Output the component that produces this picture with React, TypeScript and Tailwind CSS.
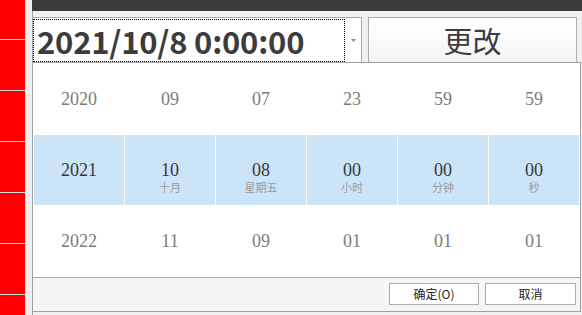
import React from "react";

const cols = [
  { prev: "2020", cur: "2021", next: "2022", sub: "" },
  { prev: "09", cur: "10", next: "11", sub: "十月" },
  { prev: "07", cur: "08", next: "09", sub: "星期五" },
  { prev: "23", cur: "00", next: "01", sub: "小时" },
  { prev: "59", cur: "00", next: "01", sub: "分钟" },
  { prev: "59", cur: "00", next: "01", sub: "秒" },
];

const serif = { fontFamily: '"Liberation Serif", serif' };
const cjk = '"Noto Sans CJK SC", sans-serif';

export default function App() {
  return (
    <div className="flex w-[582px] h-[315px] overflow-hidden bg-[#f0f0f0]">
      {/* red strip */}
      <div className="flex flex-col w-[25px] bg-[#ff0000] shrink-0">
        <div className="h-[40px] shrink-0 border-b border-[#d8d8d8]" />
        {[0, 1, 2, 3, 4, 5].map((i) => (
          <div key={i} className="h-[51px] shrink-0 border-b border-[#d8d8d8]" />
        ))}
      </div>
      <div className="w-px bg-[#e6e6e6] shrink-0" />
      <div className="w-[6px] bg-[#f0f0f0] shrink-0" />
      {/* main */}
      <div className="flex flex-col w-[550px] shrink-0">
        <div className="h-[11px] bg-[#3c3c3c] shrink-0" />
        <div className="flex flex-col flex-1 border-l border-[#a0a0a0] pt-[6px]">
          <div className="flex h-[45px] shrink-0">
            {/* combo */}
            <div className="relative flex w-[329px] h-[45px] bg-white border-t border-r border-[#a9a9a9] pt-px">
              <div
                className="flex items-center w-[312px] h-[43px] border border-dotted border-black pl-[3px]"
                style={{ fontFamily: cjk }}
              >
                <span className="text-[31px] font-bold leading-none text-[#3c3c3c] tracking-[-0.2px]">
                  2021/10/8 0:00:00
                </span>
              </div>
              <div className="flex flex-1 items-center justify-center">
                <svg width="5" height="3" viewBox="0 0 5 3">
                  <path d="M0 0 H5 L2.5 3 Z" fill="#8a8a8a" />
                </svg>
              </div>
            </div>
            <div className="w-[6px]" />
            <div
              className="flex items-center justify-center w-[209px] h-[45px] border-t border-l border-r border-[#adadad] bg-gradient-to-b from-white to-[#f4f4f4] text-[29px] text-[#3c3c3c] leading-none"
              style={{ fontFamily: cjk }}
            >
              更改
            </div>
          </div>
          {/* popup */}
          <div className="flex flex-col w-[548px] h-[250px] bg-white border border-l-0 border-[#a0a0a0]">
            <div className="grid grid-cols-6 gap-x-px px-px h-[72px]">
              {cols.map((c, i) => (
                <div key={i} className="flex items-center justify-center text-[18px] text-[#7c7c7c]" style={serif}>
                  {c.prev}
                </div>
              ))}
            </div>
            <div className="grid grid-cols-6 gap-x-px px-px h-[70px]">
              {cols.map((c, i) => (
                <div key={i} className="flex flex-col items-center bg-[#cce4f7] pt-[24px]">
                  <div className="text-[18px] leading-[22px] text-[#383838]" style={serif}>
                    {c.cur}
                  </div>
                  <div className="text-[11px] leading-[12px] text-[#9a9a9a]" style={{ fontFamily: cjk }}>
                    {c.sub}
                  </div>
                </div>
              ))}
            </div>
            <div className="grid grid-cols-6 gap-x-px px-px h-[72px]">
              {cols.map((c, i) => (
                <div key={i} className="flex items-center justify-center text-[18px] text-[#7c7c7c]" style={serif}>
                  {c.next}
                </div>
              ))}
            </div>
            <div className="flex justify-end items-start gap-[6px] flex-1 border-t border-[#a9a9a9] bg-[#f5f5f5] pt-[5px] pr-[4px]">
              <div
                className="flex items-center justify-center w-[90px] h-[22px] bg-white border border-[#adadad] text-[12px] text-[#222]"
                style={{ fontFamily: cjk }}
              >
                确定(O)
              </div>
              <div
                className="flex items-center justify-center w-[91px] h-[22px] bg-white border border-[#adadad] text-[12px] text-[#222]"
                style={{ fontFamily: cjk }}
              >
                取消
              </div>
            </div>
          </div>
        </div>
      </div>
    </div>
  );
}
